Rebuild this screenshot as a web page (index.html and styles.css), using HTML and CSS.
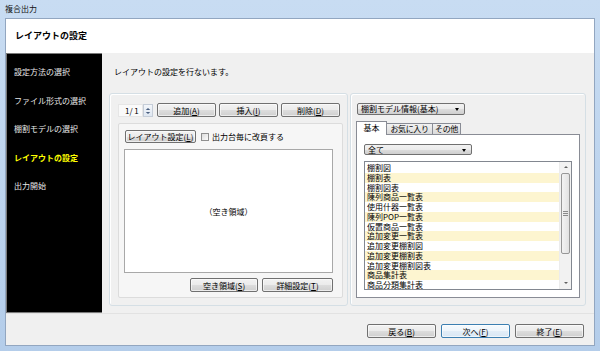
FILE: index.html
```html
<!DOCTYPE html>
<html lang="ja">

<head>
    <meta charset="UTF-8">
    <title>複合出力</title>
    <link rel="stylesheet" href="styles.css">
</head>

<body>
    <div class="window">
        <div class="titlebar">複合出力</div>
        <div class="client">
            <div class="header">レイアウトの設定</div>
            <div class="main">
                <ul class="steps">
                    <li>設定方法の選択</li>
                    <li>ファイル形式の選択</li>
                    <li>棚割モデルの選択</li>
                    <li class="current">レイアウトの設定</li>
                    <li>出力開始</li>
                </ul>
                <div class="content">
                    <p class="lead">レイアウトの設定を行ないます。</p>
                    <div class="groups">
                        <div class="group group-left">
                            <div class="toolbar">
                                <div class="spin">
                                    <span class="spin-text">1/&nbsp;1</span>
                                    <span class="spin-btn">
                                        <svg width="9" height="12" viewBox="0 0 9 12">
                                            <path d="M2 5 L4.5 2.5 L7 5 Z" fill="#4a5f80"/>
                                            <path d="M2 7 L4.5 9.5 L7 7 Z" fill="#4a5f80"/>
                                        </svg>
                                    </span>
                                </div>
                                <span class="btn btn-tool">追加(<u>A</u>)</span>
                                <span class="btn btn-tool">挿入(<u>I</u>)</span>
                                <span class="btn btn-tool">削除(<u>D</u>)</span>
                            </div>
                            <div class="panel">
                                <div class="panel-top">
                                    <span class="btn btn-layout">レイアウト設定(<u>L</u>)</span>
                                    <span class="check"></span>
                                    <span class="check-label">出力台毎に改頁する</span>
                                </div>
                                <div class="canvas">（空き領域）</div>
                                <div class="panel-btns">
                                    <span class="btn btn-empty">空き領域(<u>S</u>)</span>
                                    <span class="btn btn-detail">詳細設定(<u>T</u>)</span>
                                </div>
                            </div>
                        </div>
                        <div class="group group-right">
                            <div class="select select-model">棚割モデル情報(基本)</div>
                            <ul class="tabs">
                                <li class="tab active">基本</li>
                                <li class="tab">お気に入り</li>
                                <li class="tab">その他</li>
                            </ul>
                            <div class="tabpanel">
                                <div class="select select-all">全て</div>
                                <div class="listbox">
                                    <ul class="items">
                                        <li>棚割図</li>
                                        <li>棚割表</li>
                                        <li>棚割図表</li>
                                        <li>陳列商品一覧表</li>
                                        <li>使用什器一覧表</li>
                                        <li>陳列POP一覧表</li>
                                        <li>仮置商品一覧表</li>
                                        <li>追加変更一覧表</li>
                                        <li>追加変更棚割図</li>
                                        <li>追加変更棚割表</li>
                                        <li>追加変更棚割図表</li>
                                        <li>商品集計表</li>
                                        <li>商品分類集計表</li>
                                    </ul>
                                    <div class="vscroll">
                                        <span class="arrow">
                                            <svg width="10" height="10" viewBox="0 0 10 10"><path d="M3 6 L5 4 L7 6 Z" fill="#606060"/></svg>
                                        </span>
                                        <div class="track">
                                            <div class="thumb">
                                                <svg width="5" height="5" viewBox="0 0 5 5">
                                                    <path d="M0 0.5 H5 M0 2.5 H5 M0 4.5 H5" stroke="#8a8a8a" stroke-width="1"/>
                                                </svg>
                                            </div>
                                        </div>
                                        <span class="arrow">
                                            <svg width="10" height="10" viewBox="0 0 10 10"><path d="M3 4 L5 6 L7 4 Z" fill="#606060"/></svg>
                                        </span>
                                    </div>
                                </div>
                            </div>
                        </div>
                    </div>
                </div>
            </div>
            <div class="footer">
                <span class="btn btn-nav">戻る(<u>B</u>)</span>
                <span class="btn btn-nav btn-default">次へ(<u>F</u>)</span>
                <span class="btn btn-nav">終了(<u>E</u>)</span>
            </div>
        </div>
    </div>
</body>

</html>
```

FILE: styles.css
```css
* {
    box-sizing: border-box;
}

body {
    margin: 0;
    font-family: "Noto Sans CJK JP", "Noto Sans", sans-serif;
    font-size: 8px;
    color: #000;
}

ul {
    margin: 0;
    padding: 0;
    list-style: none;
}

u {
    text-decoration: underline;
}

/* window frame */
.window {
    width: 600px;
    height: 351px;
    padding: 0 5px 5px;
    display: flex;
    flex-direction: column;
    background: linear-gradient(#c8dcf2, #b4cdea);
}

.titlebar {
    height: 18px;
    line-height: 17px;
    color: #111;
}

.client {
    flex: 1;
    display: flex;
    flex-direction: column;
    background: #f0f0f0;
    border: 1px solid #92a6c0;
}

.header {
    height: 34px;
    line-height: 33px;
    padding-left: 9px;
    background: #fff;
    font-size: 9px;
    font-weight: bold;
}

.main {
    display: flex;
    height: 260px;
}

/* left step list */
.steps {
    width: 96px;
    padding-top: 4px;
    background: #000;
    border: 1px solid #7a7a7a;
    border-right: none;
}

.steps li {
    height: 28.5px;
    line-height: 28.5px;
    padding-left: 7px;
    color: #e8e8e8;
}

.steps li.current {
    color: #ffff00;
    font-weight: bold;
}

.content {
    flex: 1;
    padding: 13px 8px 0 7px;
}

.lead {
    margin: 0 0 0 5px;
    height: 12px;
    line-height: 12px;
}

.groups {
    display: flex;
    gap: 2px;
    height: 213px;
    margin-top: 15px;
}

.group {
    border: 1px solid #d5dfe5;
    border-radius: 3px;
    box-shadow: inset 1px 1px 0 #fff;
}

/* buttons */
.btn {
    display: flex;
    align-items: center;
    justify-content: center;
    height: 14px;
    border: 1px solid #707070;
    border-radius: 2px;
    background: linear-gradient(#f2f2f2 0%, #ebebeb 50%, #dddddd 51%, #cfcfcf 100%);
    box-shadow: inset 0 0 0 1px rgba(255, 255, 255, 0.6);
    white-space: nowrap;
}

.btn-default {
    border-color: #3c7fb1;
    background: linear-gradient(#f6fafd 0%, #eef5fb 50%, #e2edf7 51%, #d8e7f4 100%);
}

/* left group */
.group-left {
    width: 239px;
    padding: 9px 0 0 8px;
}

.toolbar {
    display: flex;
    align-items: center;
    height: 14px;
}

.spin {
    display: flex;
    width: 35px;
    height: 13px;
    margin-right: 4px;
}

.spin-text {
    width: 25px;
    line-height: 12px;
    padding-left: 6px;
    background: #fafafa;
    border: 1px solid #e6e6e6;
    white-space: nowrap;
}

.spin-btn {
    width: 10px;
    display: flex;
    border: 1px solid #c5cdd8;
    background: linear-gradient(#f3f6fa, #dfe7f1);
}

.btn-tool {
    width: 59px;
    margin-right: 3px;
}

.panel {
    width: 225px;
    height: 175px;
    margin-top: 6px;
    padding: 6px 0 0 5px;
    background: #f6f6f6;
    border: 1px solid #dcdcdc;
    border-radius: 2px;
}

.panel-top {
    display: flex;
    align-items: center;
    height: 13px;
    margin-left: 1px;
}

.btn-layout {
    width: 71px;
    height: 13px;
}

.check {
    width: 8px;
    height: 8px;
    margin-left: 5px;
    border: 1px solid #8f8f8f;
    background: linear-gradient(135deg, #dcdcdc, #fbfbfb);
}

.check-label {
    margin-left: 3px;
}

.canvas {
    display: flex;
    align-items: center;
    justify-content: center;
    width: 209px;
    height: 124px;
    margin-top: 6px;
    background: #fff;
    border: 1px solid #a8a8a8;
}

.panel-btns {
    display: flex;
    justify-content: flex-end;
    gap: 4px;
    width: 209px;
    margin-top: 5px;
}

.btn-empty {
    width: 68px;
}

.btn-detail {
    width: 71px;
}

/* right group */
.group-right {
    flex: 1;
    padding: 9px 0 0 6px;
}

.select {
    position: relative;
    height: 12px;
    line-height: 10px;
    padding-left: 3px;
    border: 1px solid #707070;
    border-radius: 2px;
    background: linear-gradient(#f2f2f2 0%, #ebebeb 50%, #dddddd 51%, #cfcfcf 100%);
    white-space: nowrap;
}

.select:after {
    content: "";
    position: absolute;
    right: 5px;
    top: 4px;
    border-left: 2.5px solid transparent;
    border-right: 2.5px solid transparent;
    border-top: 3px solid #000;
}

.select-model {
    width: 108px;
}

.tabs {
    display: flex;
    align-items: flex-end;
    height: 13px;
    margin: 6px 0 0 -1px;
    position: relative;
    z-index: 1;
}

.tab {
    height: 11px;
    line-height: 10px;
    padding: 0;
    text-align: center;
    white-space: nowrap;
    letter-spacing: -0.4px;
    border: 1px solid #898c95;
    border-bottom: none;
    background: linear-gradient(#f2f2f2, #dadada);
}

.tab + .tab {
    margin-left: -1px;
}

.tab.active {
    width: 31px;
    height: 14px;
    line-height: 12px;
    margin-bottom: -1px;
    letter-spacing: 0;
    background: #fff;
}

.tab:nth-child(2) {
    width: 47px;
}

.tab:nth-child(3) {
    width: 29px;
}

.tabpanel {
    width: 224px;
    height: 164px;
    margin-left: -1px;
    padding: 9px 0 0 7px;
    background: #fff;
    border: 1px solid #898c95;
}

.select-all {
    width: 108px;
    height: 11px;
    line-height: 9px;
}

.listbox {
    display: flex;
    width: 208px;
    height: 129px;
    margin-top: 6px;
    border: 1px solid #828790;
    background: #fff;
}

.items {
    flex: 1;
    padding-top: 1px;
}

.items li {
    height: 9.75px;
    line-height: 9.75px;
    padding-left: 2px;
}

.items li:nth-child(even) {
    background: #fdf5d0;
}

.vscroll {
    width: 12px;
    display: flex;
    flex-direction: column;
    background: #f2f2f2;
    border-left: 1px solid #ececec;
}

.arrow {
    display: flex;
    justify-content: center;
    height: 11px;
}

.track {
    flex: 1;
}

.thumb {
    display: flex;
    align-items: center;
    justify-content: center;
    height: 81px;
    margin: 0 1px;
    border: 1px solid #979797;
    border-radius: 2px;
    background: linear-gradient(90deg, #f3f3f3, #e2e2e2);
}

/* bottom buttons */
.footer {
    display: flex;
    justify-content: flex-end;
    gap: 5px;
    flex: 1;
    padding: 10px 10px 0 0;
    border-top: 1px solid #e2e2e2;
}

.btn-nav {
    width: 69px;
}
```
